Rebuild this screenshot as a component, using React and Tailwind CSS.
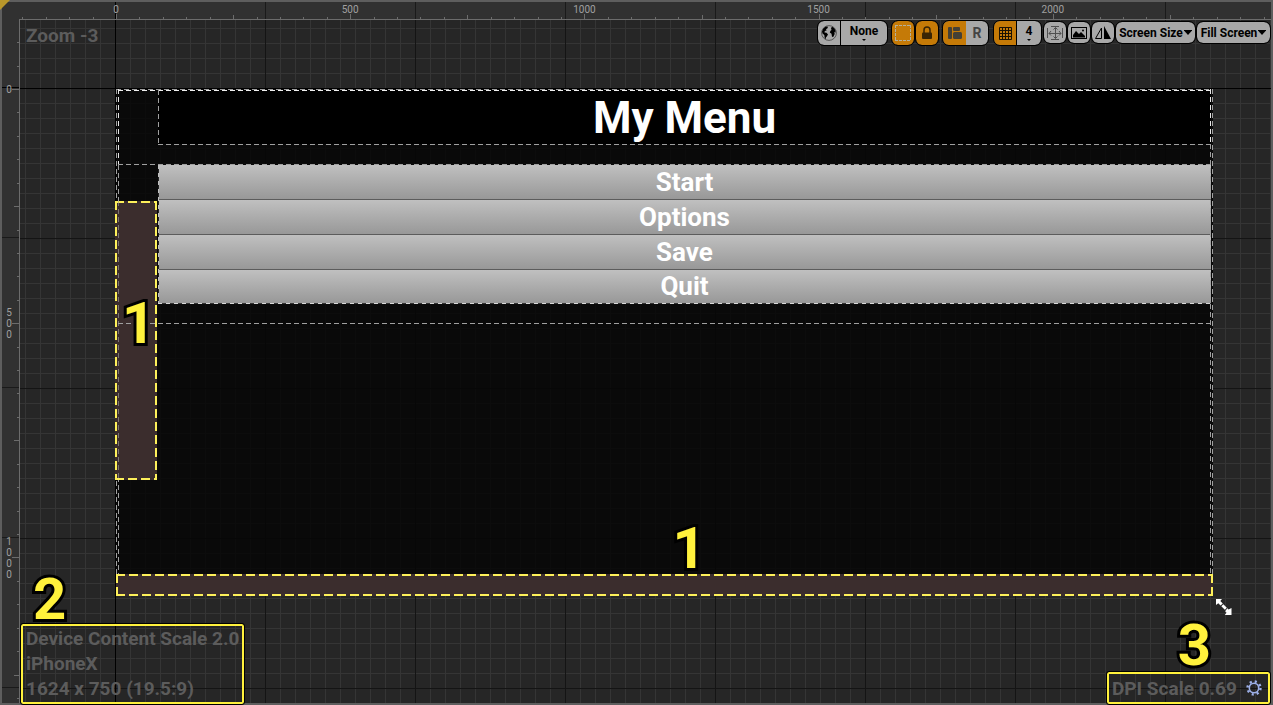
import React from "react";

const WHITE_X = "h-px bg-[repeating-linear-gradient(90deg,#a0a0a0_0_5px,transparent_5px_8px)]";
const WHITE_Y = "w-px bg-[repeating-linear-gradient(180deg,#a0a0a0_0_5px,transparent_5px_8px)]";
const BRIGHT_X = "h-px bg-[repeating-linear-gradient(90deg,#f0f0f0_0_5px,transparent_5px_8px)]";
const BRIGHT_Y = "w-px bg-[repeating-linear-gradient(180deg,#e8e8e8_0_5px,transparent_5px_8px)]";
const YELLOW_X = "h-0.5 bg-[repeating-linear-gradient(90deg,#fdf05a_0_9px,transparent_9px_13px)]";
const YELLOW_Y = "w-0.5 bg-[repeating-linear-gradient(180deg,#fdf05a_0_9px,transparent_9px_13px)]";

const TOP_RULER_GRID =
  "[background:linear-gradient(#000,#000)_113px_0/1px_100%_no-repeat,linear-gradient(90deg,#1a1a1a_1px,transparent_1px)_113px_0/150px_100%]";
const LEFT_RULER_GRID =
  "[background:linear-gradient(#000,#000)_0_68px/100%_1px_no-repeat,linear-gradient(#1a1a1a_1px,transparent_1px)_0_68px/100%_150px]";
const CANVAS_GRID =
  "[background:linear-gradient(#000,#000)_95px_0/1px_100%_no-repeat,linear-gradient(#000,#000)_0_68px/100%_1px_no-repeat,linear-gradient(90deg,#141414_1px,transparent_1px)_95px_0/150px_100%,linear-gradient(#141414_1px,transparent_1px)_0_68px/100%_150px,linear-gradient(90deg,#353535_1px,transparent_1px)_5px_0/15px_100%,linear-gradient(#353535_1px,transparent_1px)_0_8px/100%_15px,#262626]";

// Pixels per 50 ruler units at the current zoom level.
const UNIT = 23.42;

function DangerZone({ className }) {
  return (
    <div className={`absolute bg-[#3b2d2d] ${className}`}>
      <div className={`absolute inset-x-0 top-0 ${YELLOW_X}`} />
      <div className={`absolute inset-x-0 bottom-0 ${YELLOW_X}`} />
      <div className={`absolute inset-y-0 left-0 ${YELLOW_Y}`} />
      <div className={`absolute inset-y-0 right-0 ${YELLOW_Y}`} />
    </div>
  );
}

function Callout({ children, className }) {
  return (
    <span
      className={`font-['Roboto'] text-[58px] leading-none font-bold text-[#fff13c] [-webkit-text-stroke:6px_black] [paint-order:stroke_fill] ${className}`}
    >
      {children}
    </span>
  );
}

function TopRuler() {
  const ticks = [];
  for (let n = -4; n < 50; n++) {
    const x = Math.round(114 + n * UNIT);
    const h = n % 10 === 0 ? 5 : n % 5 === 0 ? 4 : 2;
    ticks.push(<rect key={n} x={x} y={17 - h} width="1" height={h} fill="#6c6c6c" />);
  }
  return (
    <svg className={`h-[17px] w-full shrink-0 ${TOP_RULER_GRID}`} aria-label="Horizontal ruler">
      {ticks}
      {[0, 500, 1000, 1500, 2000].map((v) => (
        <text key={v} x={114 + (v / 50) * UNIT} y="11" textAnchor="middle" fontSize="10" fontFamily="Roboto, sans-serif" fill="#a0a0a0">
          {v}
        </text>
      ))}
    </svg>
  );
}

function LeftRuler() {
  const ticks = [];
  for (let n = -2; n < 27; n++) {
    const y = Math.round(70 + n * UNIT);
    const w = n % 10 === 0 ? 7 : n % 5 === 0 ? 5 : 2;
    ticks.push(<rect key={n} x={17 - w} y={y} width={w} height="1" fill="#6c6c6c" />);
  }
  const labels = [["0", 74], ["5", 297], ["0", 308], ["0", 319], ["1", 526], ["0", 537], ["0", 548], ["0", 559]];
  return (
    <svg className={`h-full w-[17px] shrink-0 ${LEFT_RULER_GRID}`} aria-label="Vertical ruler">
      {ticks}
      {labels.map(([t, y]) => (
        <text key={y} x="7" y={y} textAnchor="middle" fontSize="10" fontFamily="Roboto, sans-serif" fill="#a0a0a0">
          {t}
        </text>
      ))}
    </svg>
  );
}

const GROUP = "flex h-6 overflow-hidden rounded-md bg-[#a8a8a8] outline outline-1 outline-black";
const BTN = "flex h-[21px] items-center justify-center rounded-md bg-[#a8a8a8] outline outline-1 outline-black";
const TOGGLE = "flex h-6 w-[22px] items-center justify-center rounded-md bg-[#c57a07] outline outline-1 outline-black";

function Caret({ small }) {
  return small ? (
    <svg width="4" height="2" viewBox="0 0 4 2">
      <path d="M0 0h4L2 2z" />
    </svg>
  ) : (
    <svg className="ml-px" width="8" height="5" viewBox="0 0 8 5">
      <path d="M0 0h8v.6L4 5 0 .6z" />
    </svg>
  );
}

function Toolbar() {
  return (
    <div className="flex items-start pt-px pr-px text-xs font-bold text-black">
      <div className={`mr-[5px] divide-x divide-black ${GROUP}`}>
        <button aria-label="Localization preview" className="flex w-[23px] items-center justify-center">
          <svg width="16" height="16" viewBox="0 0 16 16">
            <circle cx="8" cy="8" r="7.400" fill="none" stroke="#333" strokeWidth=".7" />
            <path d="M1 6.500l1.500-3.300L5 1.500l2 .3-.5 1.500-1.500 1 .6 1.200-1.800.6-.3 1.400 2 .3 1.500 1.700-1.200 2-.8.7-.3 2-1-1.300-.4-2.800L1.500 8.500z" />
            <path d="M10 3l1.200-1.300 2 1.500 1.300 2.300v2.200l-1.200-1 .4 2.300-1.500 3-1.200-.2-.5-3-1.700-1.300.7-1.800 1-.8z" />
          </svg>
        </button>
        <button className="flex w-[46px] flex-col items-center pt-0.5">
          <span className="leading-4">None</span>
          <Caret small />
        </button>
      </div>
      <button aria-label="Toggle outlines" className={`mr-0.5 ${TOGGLE}`}>
        <svg className="shrink-0" width="16" height="16" viewBox="0 0 16 16" fill="none" stroke="#b4b09c" strokeDasharray="3 1">
          <path d="M0 .5h16M0 15.500h16M.5 0v16M15.500 0v16" />
        </svg>
      </button>
      <button aria-label="Respect locks" className={`mr-[5px] ${TOGGLE}`}>
        <svg width="12" height="14" viewBox="0 0 12 14">
          <path d="M3 7V4a3 3 0 0 1 6 0v3" fill="none" stroke="#3a2504" strokeWidth="1.5" />
          <rect x="1" y="6.5" width="10" height="6.5" rx="1" fill="#3a2504" />
        </svg>
      </button>
      <div className={`mr-1.5 ${GROUP}`}>
        <button aria-label="Layout transform" className="flex w-[23px] items-center justify-center bg-[#c57a07]">
          <svg width="14" height="12" viewBox="0 0 14 12" fill="#444036">
            <rect x="0" y="0" width="4" height="12" rx="1" />
            <rect x="5" y="0" width="7" height="4" rx="1" />
            <rect x="5" y="5" width="9" height="7" rx="1.5" />
          </svg>
        </button>
        <button aria-label="Render transform" className="w-[22px] text-sm text-[#444]">
          R
        </button>
      </div>
      <div className={`mr-[3px] divide-x divide-black ${GROUP}`}>
        <button aria-label="Grid snapping" className="flex w-[23px] items-center justify-center bg-[#c57a07]">
          <svg width="13" height="13" viewBox="0 0 13 13" fill="none" stroke="#1c1202">
            <path d="M.5 .5h12v12h-12zM3.5 0v13M6.5 0v13M9.5 0v13M0 3.5h13M0 6.5h13M0 9.5h13" />
          </svg>
        </button>
        <button className="flex w-6 flex-col items-center pt-0.5">
          <span className="leading-4">4</span>
          <Caret small />
        </button>
      </div>
      <button aria-label="Size to content" className={`mt-px mr-0.5 w-[22px] ${BTN}`}>
        <svg width="18" height="16" viewBox="0 0 18 16" fill="none" stroke="#505050">
          <path d="M1.500 3v10M16.500 3v10M5 1.500h8M5 14.500h8M3 8.500h12M9.500 2.500v11M5 6L3 8.500l2 2M13 6l2 2.500-2 2M7.500 4.500l2-2 2 2M7.500 11.500l2 2 2-2" />
        </svg>
      </button>
      <button aria-label="Background image" className={`mt-px mr-0.5 w-[22px] ${BTN}`}>
        <svg width="16" height="12" viewBox="0 0 16 12">
          <rect x=".5" y=".5" width="15" height="11" fill="none" stroke="#000" />
          <path d="M2 10.500V8l3-4 3 3 2-2 4 4v1.500z" />
          <circle cx="12" cy="3.500" r="1" />
        </svg>
      </button>
      <button aria-label="Flip preview" className={`mt-px mr-0.5 w-[22px] ${BTN}`}>
        <svg width="18" height="14" viewBox="0 0 18 14">
          <path d="M7.500 2v10.500H1.500z" fill="none" stroke="#000" />
          <path d="M10 0v13h7z" />
        </svg>
      </button>
      <button className={`mt-px mr-0.5 w-[79px] ${BTN}`}>
        Screen Size
        <Caret />
      </button>
      <button className={`mt-px w-[73px] ${BTN}`}>
        Fill Screen
        <Caret />
      </button>
    </div>
  );
}

const MENU = ["Start", "Options", "Save", "Quit"];

function Preview() {
  return (
    <div className="relative z-10 mr-[58px] ml-24 flex-1">
      <div className="flex h-full flex-col bg-[#050505]/85 pl-[42px]">
        <h1 className="mt-px mr-0.5 h-[54px] bg-black text-center text-[44px] leading-[56px] font-bold">My Menu</h1>
        <nav className="mt-[21px] mr-0.5 flex flex-col">
          {MENU.map((m) => (
            <button
              key={m}
              className="h-[35px] bg-linear-to-b from-[#c0c0c0] to-[#979797] text-[26px] leading-[35px] font-bold shadow-[inset_0_-1px_#5c5c5c] last:h-[34px] last:pb-0.5 last:leading-8 last:shadow-none"
            >
              {m}
            </button>
          ))}
        </nav>
      </div>
      <div className={`absolute inset-x-0 top-0 ${WHITE_X}`} />
      <div className={`absolute top-px right-0.5 left-0.5 ${BRIGHT_X}`} />
      <div className={`absolute top-0 left-0.5 h-[76px] ${BRIGHT_Y}`} />
      <div className={`absolute top-[76px] bottom-0 left-0.5 ${WHITE_Y}`} />
      <div className={`absolute inset-y-0 left-0 ${WHITE_Y}`} />
      <div className={`absolute top-0 right-0.5 h-[55px] ${BRIGHT_Y}`} />
      <div className={`absolute top-[55px] right-0.5 bottom-0 ${WHITE_Y}`} />
      <div className={`absolute inset-y-0 right-0 ${WHITE_Y}`} />
      <div className={`absolute top-px left-[42px] h-[54px] ${WHITE_Y}`} />
      <div className={`absolute top-[55px] right-0.5 left-[42px] ${WHITE_X}`} />
      <div className={`absolute top-[75px] right-0.5 left-0.5 ${WHITE_X}`} />
      <div className="absolute top-[76px] left-[42px] h-[138px] w-px bg-[repeating-linear-gradient(180deg,#c0c0c0_0_4px,#222_4px_8px)]" />
      <div className="absolute top-[214px] right-0.5 left-[42px] h-px bg-[repeating-linear-gradient(90deg,#d8d8d8_0_4px,#333_4px_8px)]" />
      <DangerZone className="top-28 -left-px h-[279px] w-[42px]" />
      <div className={`absolute top-[234px] right-0.5 left-0.5 ${WHITE_X}`} />
      <DangerZone className="inset-x-0 bottom-0 h-[22px]" />
      <div className={`absolute top-28 left-0.5 h-[279px] opacity-60 ${WHITE_Y}`} />
      <Callout className="absolute top-[205px] left-1.5">1</Callout>
      <Callout className="absolute bottom-[19px] left-1/2 ml-2">1</Callout>
      <svg className="absolute -right-[19px] -bottom-[19px]" width="17" height="16" viewBox="0 0 17 16" fill="#fff">
        <path d="M1 0h6L5.300 2 7.800 4.500 5.500 6.500 3.300 4.200 1 6z" />
        <path d="M8.300 5.200l3.500 3.500-2 2L6.300 7.300z" />
        <path d="M12.300 9.200l1.200 1.300L16.500 9v7H9.800l1.700-2.200-1.300-1.600z" />
      </svg>
    </div>
  );
}

const INFO_BOX =
  "rounded-xs border-2 border-[#fff13c] px-[3px] text-[19px] leading-[25px] whitespace-nowrap text-[#5c5c5c] outline outline-1 outline-black";

function Gear() {
  return (
    <svg width="16" height="16" viewBox="0 0 16 16" fill="none" stroke="#9db0e8">
      <circle cx="8" cy="8" r="4.700" strokeWidth="1.600" />
      <circle cx="8" cy="8" r="6.500" strokeWidth="2.400" strokeDasharray="2.100 3" />
    </svg>
  );
}

function StatusRow() {
  return (
    <footer className="-mb-px flex h-[108px] shrink-0 items-end justify-between pr-px pl-px font-bold">
      <div className="flex flex-col">
        <Callout className="-mb-1 pl-3">2</Callout>
        <div className={`w-[223px] pb-px ${INFO_BOX}`}>
          <p>Device Content Scale 2.0</p>
          <p>iPhoneX</p>
          <p>1624 x 750 (19.5:9)</p>
        </div>
      </div>
      <div className="flex flex-col items-center">
        <Callout className="-mb-0.5 pl-3">3</Callout>
        <div className={`flex h-8 w-[163px] items-center justify-between ${INFO_BOX}`}>
          <span>DPI Scale 0.69</span>
          <button aria-label="DPI settings" className="pr-[3px]">
            <Gear />
          </button>
        </div>
      </div>
    </footer>
  );
}

export default function App() {
  return (
    <main className="relative flex h-screen flex-col border-2 border-[#5e5e5e] bg-[#313131] font-['Roboto'] text-white">
      <svg className="absolute -top-0.5 -left-0.5" width="10" height="10" viewBox="0 0 10 10">
        <path d="M0 0h10L0 10z" fill="#b8972a" />
      </svg>
      <TopRuler />
      <div className="flex min-h-0 flex-1">
        <LeftRuler />
        <section className={`flex min-w-0 flex-1 flex-col border-t border-l border-[#6c6c6c] ${CANVAS_GRID}`}>
          <header className="flex h-[69px] shrink-0 items-start justify-between">
            <p className="pt-[3px] pl-1.5 text-[19px] leading-[25px] font-bold text-[#5c5c5c]">Zoom -3</p>
            <Toolbar />
          </header>
          <Preview />
          <StatusRow />
        </section>
      </div>
    </main>
  );
}
